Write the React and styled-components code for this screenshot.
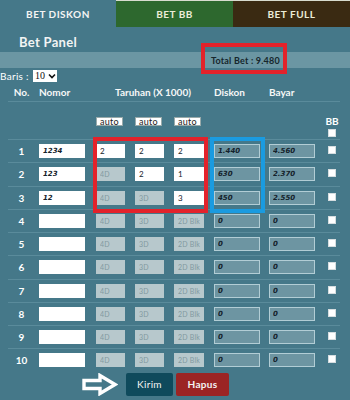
import React from "react"
import styled, { createGlobalStyle } from "styled-components"

const PAGE = "#457889"

const GlobalStyle = createGlobalStyle`
  html, body {
    margin: 0;
    padding: 0;
    background: ${PAGE};
    font-family: Lato, "Open Sans", sans-serif;
  }
  * { box-sizing: border-box; }
`

const Page = styled.div`
  width: 350px;
  height: 400px;
  overflow: hidden;
  background: ${PAGE};
  color: #fff;
`

const Tabs = styled.div`
  display: grid;
  grid-template-columns: 116px 117px 117px;
  height: 27px;
`

const Tab = styled.div`
  display: flex;
  align-items: center;
  justify-content: center;
  font-size: 10px;
  font-weight: 700;
  letter-spacing: 0.5px;
  color: ${({ active }) => (active ? "#f4f4f4" : "#ececd8")};
  background: ${({ bg }) => bg};
  border-top: ${({ active }) => (active ? "none" : "1px solid #d8dccf")};
`

const Title = styled.div`
  height: 25px;
  padding: 8px 0 0 19px;
  font-size: 13px;
  line-height: 14px;
  font-weight: 700;
  letter-spacing: 0.3px;
  color: #f2f4f4;
`

const Strip = styled.div`
  position: relative;
  height: 16px;
  background: #6b96a3;
  padding-left: 211px;
  font-size: 9px;
  font-weight: 700;
  line-height: 17px;
  letter-spacing: 0.2px;
  color: #16262c;
`

const Marker = styled.div`
  position: absolute;
  border: 4px solid ${({ color }) => color};
  pointer-events: none;
`

const BarisRow = styled.div`
  display: flex;
  align-items: center;
  gap: 4px;
  height: 15px;
  font-size: 10px;
  letter-spacing: 0.3px;
`

const SelectBox = styled.label`
  display: flex;
  align-items: center;
  width: 24px;
  height: 12px;
  background: #fff;
  padding: 0 1px 0 2px;
  color: #222;
`

const Select = styled.select`
  appearance: none;
  border: none;
  background: transparent;
  padding: 0;
  width: 13px;
  font-family: "Liberation Serif", serif;
  font-size: 10px;
  line-height: 12px;
  color: #111;
  outline: none;
`

const Table = styled.div`
  position: relative;
  padding: 0 10px 0 8px;
`

const Grid = styled.div`
  display: grid;
  grid-template-columns: 31px 57px 39px 39px 40px 55px 55px 1fr;
  align-items: center;
  height: ${({ h }) => h}px;
  border-top: ${({ line }) => (line ? "1px solid #5a8b9b" : "none")};
`

const Head = styled.div`
  font-size: 10px;
  font-weight: 700;
  color: #f6f7f7;
  grid-column: ${({ span }) => span || "auto"};
  text-align: ${({ center }) => (center ? "center" : "left")};
  padding-right: ${({ center }) => (center ? "4px" : "0")};
`

const Num = styled.div`
  text-align: center;
  padding-right: 4px;
  font-size: 10px;
  font-weight: 700;
`

const AutoButton = styled.button`
  width: 27px;
  height: 9px;
  padding: 0;
  border: 1px solid #9aa;
  background: #fff;
  font-family: Lato, sans-serif;
  font-size: 9px;
  line-height: 7px;
  color: #222;
  letter-spacing: 0.3px;
  margin-top: 2px;
`

const BBCell = styled.div`
  display: flex;
  flex-direction: column;
  align-items: center;
  gap: 2px;
  padding-top: 12px;
  font-size: 10px;
  font-weight: 700;
`

const Check = styled.input.attrs({ type: "checkbox" })`
  appearance: none;
  width: 8px;
  height: 8px;
  margin: 0 0 2px 0;
  background: #fff;
  border: 1px solid #d6dde0;
  justify-self: center;
`

const Field = styled.input`
  height: 14px;
  padding: 0 0 0 3px;
  width: ${({ w }) => w}px;
  border: 1px solid ${({ kind }) => (kind === "calc" ? "#b2cdd5" : kind === "off" ? "#b7c8cc" : "#fff")};
  background: ${({ kind }) => (kind === "calc" ? "#6d95a2" : kind === "off" ? "#b7c8cc" : "#fff")};
  font-family: ${({ strong }) => (strong ? '"DejaVu Sans", sans-serif' : "Lato, sans-serif")};
  font-size: ${({ strong }) => (strong ? "7px" : "8px")};
  font-weight: ${({ strong }) => (strong ? 700 : 400)};
  font-style: ${({ strong }) => (strong ? "italic" : "normal")};
  color: #14212a;
  outline: none;
  &::placeholder {
    color: #8299a0;
    font-family: Lato, sans-serif;
    font-size: 7px;
    letter-spacing: 0.2px;
  }
`

const Actions = styled.div`
  display: flex;
  align-items: center;
  gap: 3px;
  padding: 1px 0 0 82px;
`

const Arrow = styled.svg`
  width: 36px;
  height: 23px;
  margin-right: 5px;
`

const ActionButton = styled.button`
  height: 23px;
  width: ${({ w }) => w}px;
  border: none;
  border-radius: 2px;
  background: ${({ bg }) => bg};
  color: #f3f3f3;
  font-family: Lato, sans-serif;
  font-size: 10px;
  font-weight: ${({ bold }) => (bold ? 700 : 400)};
  letter-spacing: 0.3px;
`

const rows = [
  { nomor: "1234", t: ["2", "2", "2"], diskon: "1.440", bayar: "4.560" },
  { nomor: "123", t: ["", "2", "1"], diskon: "630", bayar: "2.370" },
  { nomor: "12", t: ["", "", "3"], diskon: "450", bayar: "2.550" },
]
while (rows.length < 10) rows.push({ nomor: "", t: ["", "", ""], diskon: "0", bayar: "0" })

const holders = ["4D", "3D", "2D Blk"]

export default function App() {
  return (
    <Page>
      <GlobalStyle />
      <Tabs>
        <Tab active bg={PAGE}>BET DISKON</Tab>
        <Tab bg="#2d682e">BET BB</Tab>
        <Tab bg="#3a2a12">BET FULL</Tab>
      </Tabs>
      <Title>Bet Panel</Title>
      <Strip>
        Total Bet : 9.480
        <Marker color="#e3222b" style={{ left: 201, top: -9, width: 86, height: 31 }} />
      </Strip>
      <BarisRow>
        Baris :
        <SelectBox>
          <Select defaultValue="10">
            <option>5</option>
            <option>10</option>
          </Select>
          <svg width="8" height="6" viewBox="0 0 8 6">
            <path d="M1 1.5 L4 4.5 L7 1.5" stroke="#111" strokeWidth="1.6" fill="none" />
          </svg>
        </SelectBox>
      </BarisRow>
      <Table>
        <Grid h={18}>
          <Head center>No.</Head>
          <Head>Nomor</Head>
          <Head span="span 3" center>Taruhan (X 1000)</Head>
          <Head>Diskon</Head>
          <Head>Bayar</Head>
        </Grid>
        <Grid h={38} line>
          <span />
          <span />
          <AutoButton>auto</AutoButton>
          <AutoButton>auto</AutoButton>
          <AutoButton>auto</AutoButton>
          <span />
          <span />
          <BBCell>
            BB
            <Check />
          </BBCell>
        </Grid>
        {rows.map((r, i) => (
          <Grid key={i} h={23.25} line>
            <Num>{i + 1}</Num>
            <Field w={46} strong defaultValue={r.nomor} />
            {r.t.map((v, j) => (
              <Field
                key={j}
                w={j === 2 ? 30 : 29}
                kind={v ? "on" : "off"}
                placeholder={holders[j]}
                defaultValue={v}
              />
            ))}
            <Field w={46} kind="calc" strong readOnly value={r.diskon} />
            <Field w={46} kind="calc" strong readOnly value={r.bayar} />
            <Check />
          </Grid>
        ))}
        <Marker color="#e3222b" style={{ left: 93, top: 54, width: 115, height: 76 }} />
        <Marker color="#1a9be0" style={{ left: 210, top: 54, width: 55, height: 76 }} />
      </Table>
      <Actions>
        <Arrow viewBox="0 0 36 23">
          <path
            d="M2 7.5 H18 V2.5 L33 11.5 L18 20.5 V15.5 H2 Z"
            fill="none"
            stroke="#fff"
            strokeWidth="3.4"
            strokeLinejoin="miter"
          />
        </Arrow>
        <ActionButton w={47} bg="#0f4a5c">Kirim</ActionButton>
        <ActionButton w={53} bg="#9b2424" bold>Hapus</ActionButton>
      </Actions>
    </Page>
  )
}
